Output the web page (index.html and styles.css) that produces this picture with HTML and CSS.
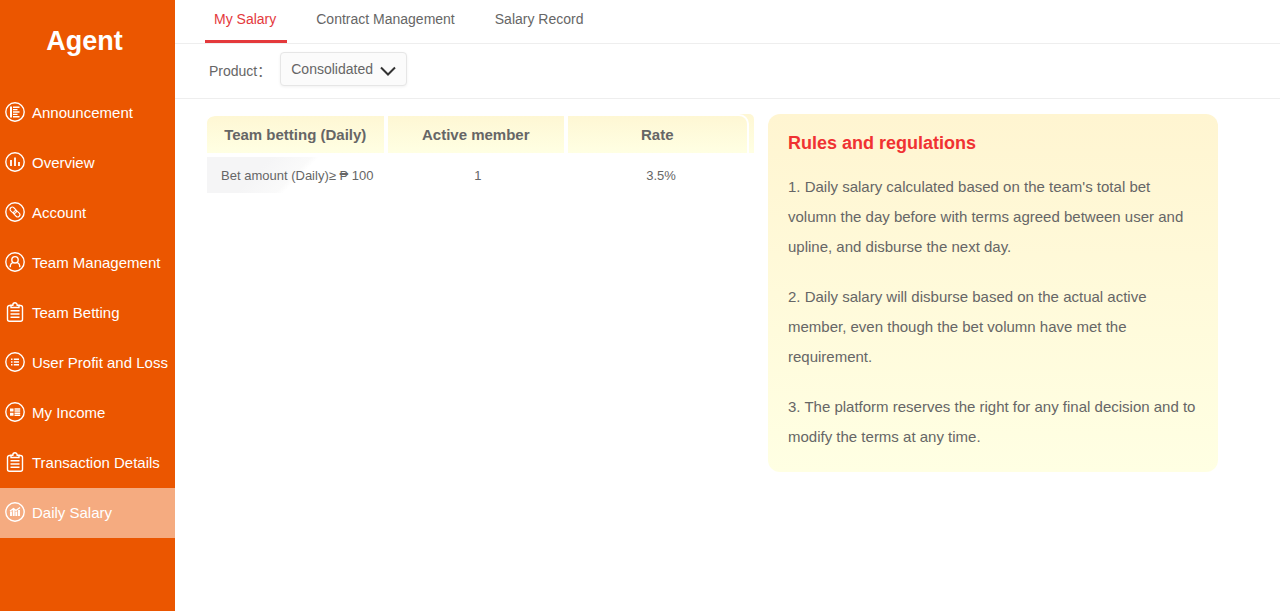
FILE: index.html
```html
<!DOCTYPE html>
<html lang="en">
  <head>
    <meta charset="UTF-8" />
    <meta name="viewport" content="width=device-width, initial-scale=1.0" />
    <title>Agent - Daily Salary</title>
    <link rel="stylesheet" href="styles.css">
  </head>
  <body>
    <div class="layout">
      <aside class="sidebar">
        <h1 class="sidebar-title">Agent</h1>
        <nav class="menu">
          <a href="#" class="menu-item">
            <svg class="icon" viewBox="0 0 20 20">
              <circle cx="10" cy="10" r="9.2" />
              <path d="M6 4.5v11" stroke-width="2" />
              <path d="M8 5.2h6.5M8 7.6h4.5M8 10h6.500M8 12.4h4.5M8 14.8h6.5" />
            </svg>
            <span>Announcement</span>
          </a>
          <a href="#" class="menu-item">
            <svg class="icon" viewBox="0 0 20 20">
              <circle cx="10" cy="10" r="9.2" />
              <path d="M6 8v6M10 5.5V14M14 10v4" stroke-width="1.8" />
            </svg>
            <span>Overview</span>
          </a>
          <a href="#" class="menu-item">
            <svg class="icon" viewBox="0 0 20 20">
              <circle cx="10" cy="10" r="9.2" />
              <g transform="rotate(45 10 10)" stroke-width="1.1">
                <rect x="4" y="7.8" width="7" height="4.4" rx="2.2" />
                <rect x="9" y="7.8" width="7" height="4.4" rx="2.2" />
              </g>
            </svg>
            <span>Account</span>
          </a>
          <a href="#" class="menu-item">
            <svg class="icon" viewBox="0 0 20 20">
              <circle cx="10" cy="10" r="9.2" />
              <circle cx="10" cy="7.800" r="3.200" />
              <path d="M5.200 15.200c0-3 1.400-4.400 3.200-4.800M14.800 15.200c0-3-1.400-4.400-3.200-4.800" />
            </svg>
            <span>Team Management</span>
          </a>
          <a href="#" class="menu-item">
            <svg class="icon" viewBox="0 0 20 20">
              <path d="M6 3.500H4.500a2 2 0 0 0-2 2v11.700a2 2 0 0 0 2 2h11a2 2 0 0 0 2-2V5.500a2 2 0 0 0-2-2H14" />
              <path d="M6 5.500V3.300h1.800a2.200 2.500 0 0 1 4.400 0H14v2.200z" />
              <path d="M5.500 8.700h9M5.500 12h9M5.500 15.300h9" />
            </svg>
            <span>Team Betting</span>
          </a>
          <a href="#" class="menu-item">
            <svg class="icon" viewBox="0 0 20 20">
              <circle cx="10" cy="10" r="9.2" />
              <path d="M6 7.300h1.500M6 10h1.500M6 12.700h1.500M8.800 7.300H14M8.800 10H14M8.800 12.700H14" />
            </svg>
            <span>User Profit and Loss</span>
          </a>
          <a href="#" class="menu-item">
            <svg class="icon" viewBox="0 0 20 20">
              <circle cx="10" cy="10" r="9.2" />
              <path d="M5 8h3.500M5 12.200h3.500" stroke-width="3" />
              <path d="M9.500 7H15.200M9.500 9H15.200M9.500 11.300H15.200M9.500 13.300H15.200" />
            </svg>
            <span>My Income</span>
          </a>
          <a href="#" class="menu-item">
            <svg class="icon" viewBox="0 0 20 20">
              <path d="M6 3.500H4.500a2 2 0 0 0-2 2v11.700a2 2 0 0 0 2 2h11a2 2 0 0 0 2-2V5.500a2 2 0 0 0-2-2H14" />
              <path d="M6 5.500V3.300h1.800a2.200 2.500 0 0 1 4.400 0H14v2.200z" />
              <path d="M5.500 8.700h9M5.500 12h9M5.500 15.300h9" />
            </svg>
            <span>Transaction Details</span>
          </a>
          <a href="#" class="menu-item active">
            <svg class="icon" viewBox="0 0 20 20">
              <circle cx="10" cy="10" r="9.2" />
              <path d="M6 9.500v4.500M8.700 8V14M11.300 9.500v4.500M14 8V14" stroke-width="1.900" />
              <path d="M5 9l3.500-2.300 2.500 1.800 4-3" />
            </svg>
            <span>Daily Salary</span>
          </a>
        </nav>
      </aside>

      <main class="main">
        <nav class="tabs">
          <a href="#" class="tab active">My Salary</a>
          <a href="#" class="tab">Contract Management</a>
          <a href="#" class="tab">Salary Record</a>
        </nav>

        <div class="filter">
          <label for="product">Product：</label>
          <div class="select-box">
            <select id="product">
              <option>Consolidated</option>
            </select>
            <svg class="arrow" viewBox="0 0 16 10">
              <path d="M1 1.500l7 7 7-7" />
            </svg>
          </div>
        </div>

        <div class="content">
          <table class="salary-table">
            <colgroup>
              <col class="col" />
              <col class="col" />
              <col class="col" />
              <col class="col-end" />
            </colgroup>
            <thead>
              <tr>
                <th><div class="head first">Team betting (Daily)</div></th>
                <th><div class="head">Active member</div></th>
                <th class="tint"><div class="head last">Rate</div></th>
                <th class="tint end"></th>
              </tr>
            </thead>
            <tbody>
              <tr>
                <td class="amount">Bet amount (Daily)≥ ₱ 100</td>
                <td>1</td>
                <td colspan="2">3.5%</td>
              </tr>
            </tbody>
          </table>

          <section class="rules">
            <h2>Rules and regulations</h2>
            <p>1. Daily salary calculated based on the team's total bet volumn the day before with terms agreed between user and upline, and disburse the next day.</p>
            <p>2. Daily salary will disburse based on the actual active member, even though the bet volumn have met the requirement.</p>
            <p>3. The platform reserves the right for any final decision and to modify the terms at any time.</p>
          </section>
        </div>
      </main>
    </div>
  </body>
</html>
```

FILE: styles.css
```css
* {
  margin: 0;
  padding: 0;
  box-sizing: border-box;
}

body {
  font-family: "Liberation Sans", Arial, "Noto Sans CJK SC", sans-serif;
  font-size: 14px;
  color: #666;
  background: #fff;
}

a {
  color: inherit;
  text-decoration: none;
}

.layout {
  display: flex;
  min-height: 100vh;
}

/* sidebar */
.sidebar {
  flex: 0 0 175px;
  background: #eb5600;
  color: #fff;
}

.sidebar-title {
  height: 88px;
  padding-right: 6px;
  font-size: 27px;
  line-height: 82px;
  text-align: center;
}

.menu-item {
  display: flex;
  align-items: center;
  gap: 7px;
  height: 50px;
  padding: 0 5px 2px;
  font-size: 15px;
  line-height: 20px;
  white-space: nowrap;
}

.menu-item span {
  padding-top: 2px;
}

.menu-item.active {
  background: #f5ab80;
}

.icon {
  flex: none;
  width: 20px;
  height: 20px;
  fill: none;
  stroke: #fff;
  stroke-width: 1.4;
}

/* main area */
.main {
  flex: 1;
  min-width: 0;
}

.tabs {
  display: flex;
  gap: 20px;
  padding-left: 30px;
  border-bottom: 1px solid #eee;
}

.tab {
  height: 43px;
  padding: 0 11px 0 9px;
  line-height: 38px;
  border-bottom: 3px solid transparent;
}

.tab.active {
  color: #e4393c;
  border-bottom-color: #e4393c;
}

.filter {
  display: flex;
  align-items: center;
  gap: 9px;
  padding: 8px 34px 12px;
  border-bottom: 1px solid #eee;
}

.filter label {
  padding-top: 2px;
}

.select-box {
  position: relative;
}

.select-box select {
  appearance: none;
  width: 127px;
  height: 34px;
  padding: 0 30px 0 10px;
  border: 1px solid #e6e6e6;
  border-radius: 4px;
  background: #fbfbfb;
  box-shadow: 0 1px 3px rgba(0, 0, 0, 0.06);
  color: #666;
  font-family: inherit;
  font-size: 14px;
}

.arrow {
  position: absolute;
  top: 14px;
  right: 11px;
  width: 16px;
  height: 10px;
  fill: none;
  stroke: #333;
  stroke-width: 2;
  pointer-events: none;
}

.content {
  display: grid;
  grid-template-columns: 547fr 450fr;
  gap: 14px;
  align-items: start;
  padding: 15px 62px 20px 32px;
}

/* salary table */
.salary-table {
  width: 100%;
  table-layout: fixed;
  border-collapse: collapse;
  text-align: center;
}

.col {
  width: 33%;
}

.col-end {
  width: 5px;
}

.head {
  height: 39px;
  border: solid #fff;
  border-width: 2px 4px 0 0;
  background: linear-gradient(#fef7d4, #ffffe3) padding-box;
  font-size: 15px;
  line-height: 38px;
}

.head.first {
  border-top-left-radius: 8px;
}

.head.last {
  border-right-width: 2px;
  border-top-right-radius: 10px;
}

.tint {
  background: linear-gradient(#fef7d4, #ffffe3);
}

.end {
  border-top-right-radius: 8px;
}

.salary-table td {
  height: 44px;
  font-size: 13px;
}

.salary-table .amount {
  background: linear-gradient(135deg, #f5f5f6 30%, #fafafa 48%, #fff 52%) 0 4px / 100% 36px no-repeat;
}

/* rules card */
.rules {
  padding: 14px 20px 20px;
  border-radius: 12px;
  background: linear-gradient(#fff5d1, #ffffe3);
  font-size: 15px;
  line-height: 30px;
}

.rules h2 {
  margin-bottom: 14px;
  color: #f03232;
  font-size: 18px;
}

.rules p + p {
  margin-top: 20px;
}
```
